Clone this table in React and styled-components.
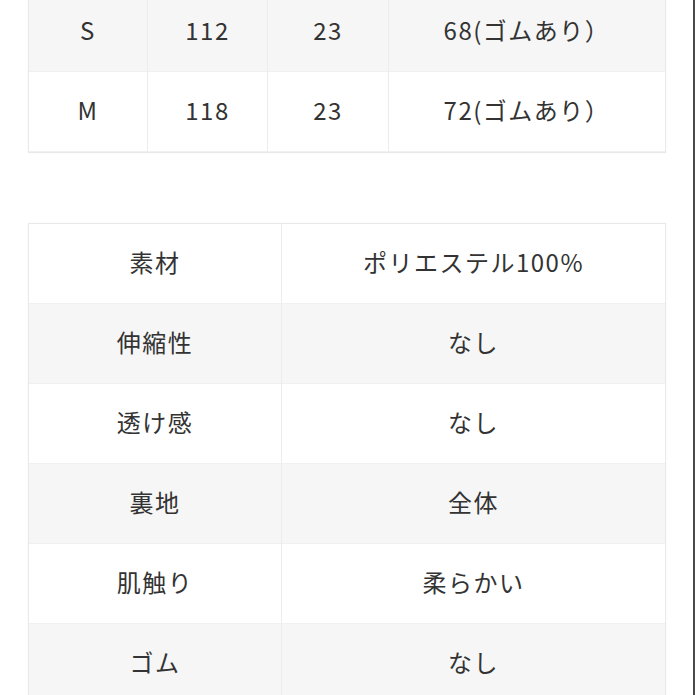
import React from "react";
import styled, { createGlobalStyle } from "styled-components";

const GlobalStyle = createGlobalStyle`
  html, body {
    margin: 0;
    padding: 0;
    background: #fff;
  }
  body {
    font-family: "Noto Sans CJK JP", "Noto Sans", sans-serif;
    color: #333;
  }
`

const Page = styled.div`
  box-sizing: border-box;
  width: 695px;
  height: 695px;
  overflow: hidden;
  padding: 0 27px 0 28px;
  border-right: 2px solid #4a4a4a;
  display: flex;
  flex-direction: column;
  gap: 70px;
`

const Table = styled.div`
  display: grid;
  grid-template-columns: ${props => props.cols};
  border: 1px solid #e9e9e9;
  margin-top: ${props => props.offset || 0}px;
  box-shadow: 0 0 2px rgba(0, 0, 0, 0.04);
`

const Cell = styled.div`
  height: 80px;
  padding-bottom: 5px;
  display: flex;
  align-items: center;
  justify-content: center;
  background: ${props => (props.shade ? "#f6f6f6" : "#fff")};
  border-right: 1px solid #ececec;
  border-bottom: 1px solid #f0f0f0;
  box-sizing: border-box;
  font-size: 24px;
  letter-spacing: 1.5px;
  font-feature-settings: "pnum";
  color: #333;
  white-space: nowrap;

  &.last {
    border-right: none;
  }
`

const sizes = [
  ["S", "112", "23", "68(ゴムあり）"],
  ["M", "118", "23", "72(ゴムあり）"],
];

const specs = [
  ["素材", "ポリエステル100%"],
  ["伸縮性", "なし"],
  ["透け感", "なし"],
  ["裏地", "全体"],
  ["肌触り", "柔らかい"],
  ["ゴム", "なし"],
];

const App = () => {
  return (
    <>
      <GlobalStyle />
      <Page>
        <Table cols="119px 120px 121px 1fr" offset={-9}>
          {sizes.map((row, i) =>
            row.map((text, j) => (
              <Cell
                key={`${i}-${j}`}
                shade={i % 2 === 0}
                className={j === row.length - 1 ? "last" : ""}
              >
                {text}
              </Cell>
            ))
          )}
        </Table>
        <Table cols="253px 1fr">
          {specs.map((row, i) =>
            row.map((text, j) => (
              <Cell
                key={`${i}-${j}`}
                shade={i % 2 === 1}
                className={j === row.length - 1 ? "last" : ""}
              >
                {text}
              </Cell>
            ))
          )}
        </Table>
      </Page>
    </>
  )
}

export default App
